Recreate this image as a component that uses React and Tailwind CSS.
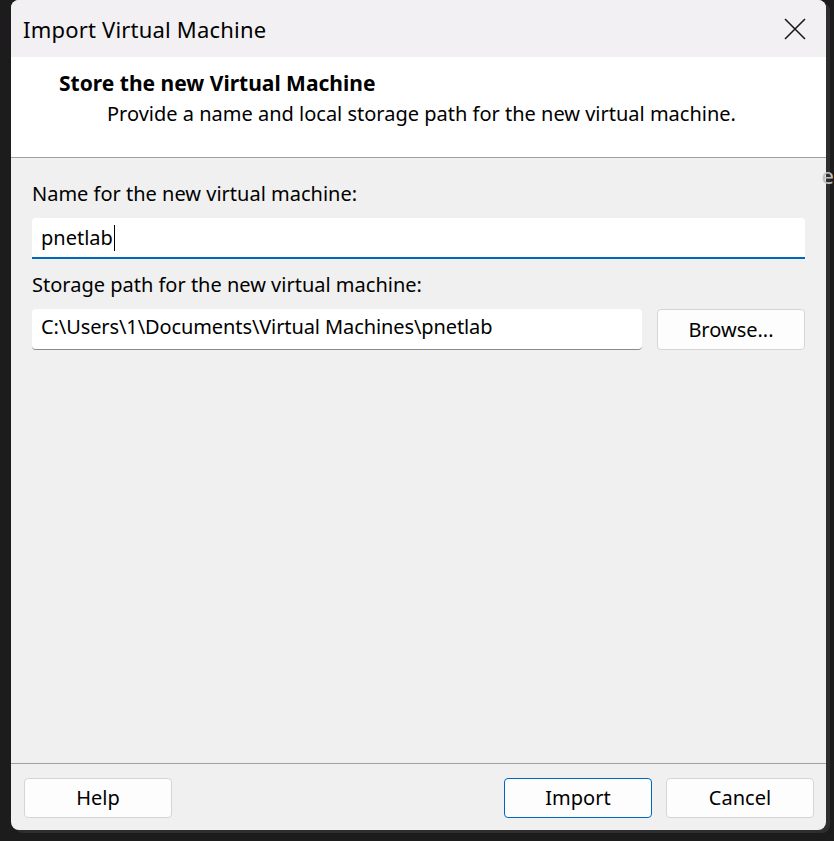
export default function App() {
  const font = { fontFamily: '"Noto Sans", "Open Sans", Arial, sans-serif' };
  return (
    <div className="w-[834px] h-[841px] bg-[#1c1c1c] relative overflow-hidden text-black" style={font}>
      <div className="absolute right-0 top-[164px] text-[22px] text-[#bfbfbf] leading-none">e</div>
      <div className="ml-[11px] w-[815px] h-[830px] rounded-b-[8px] rounded-t-[8px] overflow-hidden flex flex-col bg-[#f0f0f0] shadow-[4px_3px_0_#2e2e2e]">
        <div className="h-[57px] bg-[#f3f0f4] flex items-center justify-between pl-[12px] pr-[20px] shrink-0">
          <span className="text-[22px] leading-none pt-[1px] tracking-[0.2px]">Import Virtual Machine</span>
          <svg width="22" height="22" viewBox="0 0 22 22">
            <path d="M1 1 L21 21 M21 1 L1 21" stroke="#1a1a1a" strokeWidth="1.6" fill="none" />
          </svg>
        </div>
        <div className="h-[101px] bg-white border-b border-[#a0a0a0] shrink-0 pt-[13px]">
          <div className="pl-[48px] text-[21px] font-bold leading-[26px]">Store the new Virtual Machine</div>
          <div className="pl-[96px] text-[20px] leading-[26px] mt-[5px]">Provide a name and local storage path for the new virtual machine.</div>
        </div>
        <div className="flex-1 px-[21px] pt-[23px] flex flex-col">
          <div className="text-[20px] leading-[26px]">Name for the new virtual machine:</div>
          <div className="mt-[11px] h-[41px] bg-white border-b-2 border-[#0067c0] rounded-t-[4px] flex items-center pl-[9px] text-[20px]">
            <span>pnetlab</span>
            <span className="w-[1px] h-[26px] bg-black ml-[1px]" />
          </div>
          <div className="mt-[13px] text-[20px] leading-[26px]">Storage path for the new virtual machine:</div>
          <div className="mt-[11px] flex gap-[15px]">
            <div className="w-[610px] h-[41px] bg-white border-b border-[#8a8a8a] rounded-[4px] flex items-center pl-[9px] text-[20px] pb-[4px] tracking-[-0.1px]">
              C:\Users\1\Documents\Virtual Machines\pnetlab
            </div>
            <div className="w-[148px] h-[41px] bg-[#fdfdfd] border border-[#d5d5d5] rounded-[4px] flex items-center justify-center text-[20px]">
              Browse...
            </div>
          </div>
        </div>
        <div className="h-[67px] border-t border-[#a0a0a0] shrink-0 flex items-start pt-[14px] pl-[13px] pr-[12px]">
          <div className="w-[148px] h-[40px] bg-[#fdfdfd] border border-[#d5d5d5] rounded-[4px] flex items-center justify-center text-[20px]">Help</div>
          <div className="flex-1" />
          <div className="w-[148px] h-[40px] bg-[#fdfdfd] border border-[#0067c0] rounded-[4px] flex items-center justify-center text-[20px]">Import</div>
          <div className="w-[148px] h-[40px] ml-[14px] bg-[#fdfdfd] border border-[#d5d5d5] rounded-[4px] flex items-center justify-center text-[20px]">Cancel</div>
        </div>
      </div>
    </div>
  );
}
